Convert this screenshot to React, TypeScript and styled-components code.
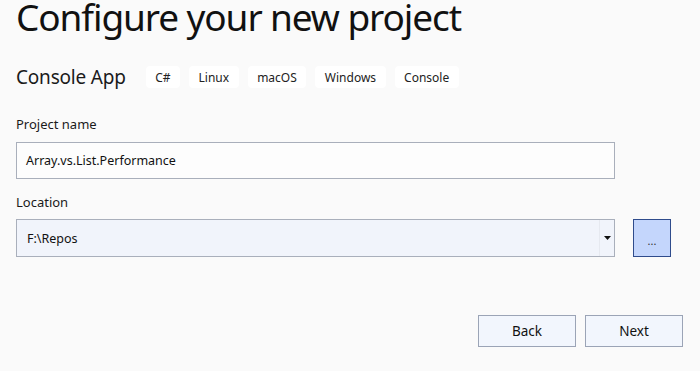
import React from "react";
import styled, { createGlobalStyle } from "styled-components";

const GlobalStyle = createGlobalStyle`
  html, body {
    margin: 0;
    padding: 0;
    background: #fafafa;
  }
  body {
    font-family: "Noto Sans", "Open Sans", sans-serif;
    color: #1a1a1a;
  }
`;

const Page = styled.div`
  width: 700px;
  height: 371px;
  box-sizing: border-box;
  padding: 0 16px;
  overflow: hidden;
`;

const Title = styled.h1`
  margin: 0;
  font-size: 37px;
  font-weight: 400;
  line-height: 34px;
  letter-spacing: -1.1px;
  color: #111;
`;

const Header = styled.div`
  display: flex;
  align-items: center;
  gap: 9px;
  margin-top: 30px;
`;

const Subtitle = styled.h2`
  margin: 0 11px 0 0;
  font-size: 19px;
  font-weight: 400;
  letter-spacing: -0.2px;
  color: #1a1a1a;
`;

const Tag = styled.span`
  display: inline-flex;
  align-items: center;
  height: 22px;
  padding: 0 9.5px;
  border-radius: 4px;
  background: #ffffff;
  font-size: 12px;
  color: #222;
`;

const Field = styled.div`
  display: flex;
  flex-direction: column;
  margin-top: ${(p: { $top: number }) => p.$top}px;
`;

const Label = styled.label`
  font-size: 13px;
  line-height: 18px;
  color: #1a1a1a;
  margin-bottom: ${(p: { $gap?: number }) => p.$gap ?? 11}px;
`;

const TextBox = styled.div`
  width: 599px;
  height: 37px;
  box-sizing: border-box;
  border: 1.5px solid #a9afbb;
  background: #fdfdfd;
  display: flex;
  align-items: center;
  padding-left: 9px;
  font-size: 12.5px;
  color: #111;
`;

const Row = styled.div`
  display: flex;
  align-items: center;
  gap: 18px;
`;

const Select = styled.div`
  width: 599px;
  height: 38px;
  box-sizing: border-box;
  border: 1.5px solid #a9afbb;
  background: #f1f4fb;
  display: flex;
  align-items: stretch;
  font-size: 12.5px;
  color: #111;
`;

const SelectValue = styled.div`
  flex: 1;
  display: flex;
  align-items: center;
  padding-left: 10px;
`;

const SelectArrow = styled.div`
  width: 14px;
  border-left: 1px solid #e6e9f0;
  display: flex;
  align-items: center;
  justify-content: center;
`;

const BrowseButton = styled.button`
  width: 38px;
  height: 38px;
  box-sizing: border-box;
  border: 1.5px solid #2f4c8c;
  background: #c4d6fc;
  font-family: inherit;
  font-size: 11px;
  color: #333;
  padding: 4px 0 0;
  cursor: pointer;
`;

const Footer = styled.div`
  display: flex;
  justify-content: flex-end;
  gap: 9px;
  margin-top: 58px;
  padding-right: 1px;
`;

const NavButton = styled.button`
  width: 98px;
  height: 32px;
  box-sizing: border-box;
  border: 1.5px solid #9ba4b6;
  background: #f2f6fd;
  font-family: inherit;
  font-size: 13.5px;
  color: #111;
  cursor: pointer;
`;

const tags = ["C#", "Linux", "macOS", "Windows", "Console"];

export default function App() {
  return (
    <>
      <GlobalStyle />
      <Page>
        <Title>Configure your new project</Title>
        <Header>
          <Subtitle>Console App</Subtitle>
          {tags.map(t => (
            <Tag key={t}>{t}</Tag>
          ))}
        </Header>
        <Field $top={25}>
          <Label $gap={9}>Project name</Label>
          <TextBox>Array.vs.List.Performance</TextBox>
        </Field>
        <Field $top={14}>
          <Label $gap={8}>Location</Label>
          <Row>
            <Select>
              <SelectValue>F:\Repos</SelectValue>
              <SelectArrow>
                <svg width="7" height="4" viewBox="0 0 7 4">
                  <path d="M0 0 H7 L3.5 4 Z" fill="#111" />
                </svg>
              </SelectArrow>
            </Select>
            <BrowseButton>...</BrowseButton>
          </Row>
        </Field>
        <Footer>
          <NavButton>Back</NavButton>
          <NavButton>Next</NavButton>
        </Footer>
      </Page>
    </>
  );
}
